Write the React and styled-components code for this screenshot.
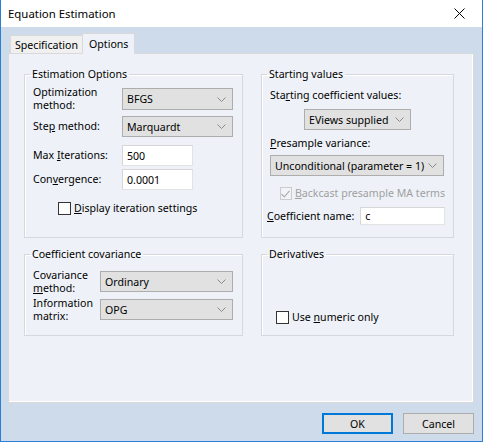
import React from 'react';
import styled, { createGlobalStyle } from 'styled-components';

const GlobalStyle = createGlobalStyle`
    html, body {
        margin: 0;
        padding: 0;
        background: #ffffff;
    }
    body {
        font-family: "Segoe UI", "Noto Sans", "Liberation Sans", sans-serif;
        font-size: 10.6px;
        color: #000000;
        white-space: nowrap;
    }
`;

const Window = styled.div`
    width: 483px;
    height: 442px;
    box-sizing: border-box;
    border: 1px solid #2b7fd8;
    border-top: none;
    display: flex;
    flex-direction: column;
    background: #cddbea;
`;

const TitleBar = styled.div`
    height: 27px;
    background: #ffffff;
    display: flex;
    align-items: center;
    justify-content: space-between;
    padding: 0 0 0 7px;
`;

const Title = styled.span`
    font-size: 11.4px;
`;

const CloseButton = styled.div`
    width: 46px;
    height: 27px;
    display: flex;
    align-items: center;
    justify-content: center;
`;

const Body = styled.div`
    flex: 1;
    display: flex;
    flex-direction: column;
    padding: 5px 8px 0 7px;
`;

const TabStrip = styled.div`
    display: flex;
    align-items: flex-end;
    height: 21px;
    padding-left: 2px;
    position: relative;
    z-index: 1;
`;

const Tab = styled.div`
    box-sizing: border-box;
    height: ${p => (p.$active ? '21px' : '19px')};
    padding: 0 ${p => (p.$active ? '6px' : '4px')};
    margin-left: ${p => (p.$active ? '-1px' : '0')};
    display: flex;
    align-items: center;
    border: 1px solid #d9d9d9;
    border-bottom: ${p => (p.$active ? '1px solid #eef2f8' : '1px solid #d9d9d9')};
    background: ${p => (p.$active ? '#eef2f8' : '#f0f0f0')};
    margin-bottom: -1px;
`;

const TabPanel = styled.div`
    height: 350px;
    box-sizing: border-box;
    background: #eef2f8;
    border: 1px solid #d9d9d9;
    box-shadow: inset -1px -1px 0 #ffffff;
    display: grid;
    grid-template-columns: 219px 193px;
    grid-template-rows: 171px 89px;
    column-gap: 18px;
    row-gap: 9px;
    padding: 13px 0 0 15px;
`;

const Group = styled.fieldset`
    margin: 0;
    padding: 0 8px;
    border: 1px solid #d5d9de;
    box-shadow: inset 1px 1px 0 #ffffff;
    min-width: 0;
`;

const Legend = styled.legend`
    padding: 0 2px;
    margin-left: -3px;
    line-height: 15px;
`;

const Row = styled.div`
    display: flex;
    align-items: center;
    margin-top: ${p => p.$mt || 0}px;
    margin-left: ${p => p.$ml || 0}px;
    height: ${p => p.$h || 21}px;
    justify-content: ${p => (p.$center ? 'center' : 'flex-start')};
`;

const Label = styled.div`
    width: ${p => (p.$w ? `${p.$w}px` : 'auto')};
    flex: none;
    line-height: 13px;
    color: ${p => (p.$disabled ? '#a0a0a0' : '#000000')};
    margin-right: ${p => p.$mr || 0}px;
`;

const Key = styled.span`
    text-decoration: underline;
`;

const ComboBox = styled.div`
    box-sizing: border-box;
    width: ${p => p.$w}px;
    height: ${p => p.$h || 21}px;
    border: 1px solid #adadad;
    background: #e1e1e1;
    display: flex;
    align-items: center;
    justify-content: space-between;
    padding: 0 6px 0 4px;
`;

const TextBox = styled.div`
    box-sizing: border-box;
    width: ${p => p.$w}px;
    height: ${p => p.$h || 21}px;
    background: #ffffff;
    border: 1px solid #e3e3e3;
    border-top-color: #d7d7d7;
    border-left-color: #d7d7d7;
    display: flex;
    align-items: center;
    padding-left: 4px;
`;

const CheckBox = styled.div`
    box-sizing: border-box;
    width: 13px;
    height: 13px;
    border: 1px solid ${p => (p.$disabled ? '#cccccc' : '#333333')};
    background: ${p => (p.$disabled ? '#f0f3f8' : '#ffffff')};
    margin-right: 3px;
    display: flex;
    align-items: center;
    justify-content: center;
`;

const ButtonRow = styled.div`
    display: flex;
    justify-content: flex-end;
    gap: 10px;
    padding: 10px 0 0 0;
`;

const Button = styled.div`
    box-sizing: border-box;
    width: 71px;
    height: 21px;
    display: flex;
    align-items: center;
    justify-content: center;
    background: #e1e1e1;
    border: ${p => (p.$default ? '2px solid #0078d7' : '1px solid #adadad')};
`;

const Chevron = () => (
    <svg width="9" height="5" viewBox="0 0 9 5">
        <path d="M0.5 0.5 L4.5 4.5 L8.5 0.5" fill="none" stroke="#8a8a8a" strokeWidth="1" />
    </svg>
);

const Combo = ({ w, h, children }) => (
    <ComboBox $w={w} $h={h}>
        <span>{children}</span>
        <Chevron />
    </ComboBox>
);

const Check = ({ checked, disabled }) => (
    <CheckBox $disabled={disabled}>
        {checked && (
            <svg width="9" height="8" viewBox="0 0 9 8">
                <path d="M0.5 4 L3.3 6.8 L8.5 0.8" fill="none" stroke={disabled ? '#b0b0b0' : '#000'} strokeWidth="1.2" />
            </svg>
        )}
    </CheckBox>
);

const App = () => {
    return (
        <>
            <GlobalStyle />
            <Window>
                <TitleBar>
                    <Title>Equation Estimation</Title>
                    <CloseButton>
                        <svg width="11" height="11" viewBox="0 0 11 11">
                            <path d="M0.5 0.5 L10.5 10.5 M10.5 0.5 L0.5 10.5" stroke="#000" strokeWidth="1" />
                        </svg>
                    </CloseButton>
                </TitleBar>
                <Body>
                    <TabStrip>
                        <Tab>Specification</Tab>
                        <Tab $active>Options</Tab>
                    </TabStrip>
                    <TabPanel>
                        <Group>
                            <Legend>Estimation Options</Legend>
                            <Row $mt={6} $h={22}>
                                <Label $w={89}>Optimization<br />method:</Label>
                                <Combo w={111} h={22}>BFGS</Combo>
                            </Row>
                            <Row $mt={6}>
                                <Label $w={89}>Ste<Key>p</Key> method:</Label>
                                <Combo w={111}>Marquardt</Combo>
                            </Row>
                            <Row $mt={8}>
                                <Label $w={89}>Max <Key>I</Key>terations:</Label>
                                <TextBox $w={71}>500</TextBox>
                            </Row>
                            <Row $mt={3}>
                                <Label $w={89}>Con<Key>v</Key>ergence:</Label>
                                <TextBox $w={71}>0.0001</TextBox>
                            </Row>
                            <Row $mt={11} $h={15} $ml={25}>
                                <Check />
                                <Label><Key>D</Key>isplay iteration settings</Label>
                            </Row>
                        </Group>
                        <Group>
                            <Legend>Starting values</Legend>
                            <Row $mt={6} $h={15}>
                                <Label>Sta<Key>r</Key>ting coefficient values:</Label>
                            </Row>
                            <Row $mt={6} $center>
                                <Combo w={107}>EViews supplied</Combo>
                            </Row>
                            <Row $mt={6} $h={15}>
                                <Label><Key>P</Key>resample variance:</Label>
                            </Row>
                            <Row $mt={4}>
                                <Combo w={174}>Unconditional (parameter = 1)</Combo>
                            </Row>
                            <Row $mt={10} $h={15} $ml={10}>
                                <Check checked disabled />
                                <Label $disabled><Key>B</Key>ackcast presample MA terms</Label>
                            </Row>
                            <Row $mt={6} $h={18} $ml={-3}>
                                <Label $mr={6}><Key>C</Key>oefficient name:</Label>
                                <TextBox $w={86} $h={18}>c</TextBox>
                            </Row>
                        </Group>
                        <Group>
                            <Legend>Coefficient covariance</Legend>
                            <Row $mt={9}>
                                <Label $w={67}>Covariance<br /><Key>m</Key>ethod:</Label>
                                <Combo w={133}>Ordinary</Combo>
                            </Row>
                            <Row $mt={7}>
                                <Label $w={67}>Information<br />matrix:</Label>
                                <Combo w={133}>OPG</Combo>
                            </Row>
                        </Group>
                        <Group>
                            <Legend>Derivatives</Legend>
                            <Row $mt={48} $h={15} $ml={6}>
                                <Check />
                                <Label>Use <Key>n</Key>umeric only</Label>
                            </Row>
                        </Group>
                    </TabPanel>
                    <ButtonRow>
                        <Button $default>OK</Button>
                        <Button>Cancel</Button>
                    </ButtonRow>
                </Body>
            </Window>
        </>
    );
};

export default App;
